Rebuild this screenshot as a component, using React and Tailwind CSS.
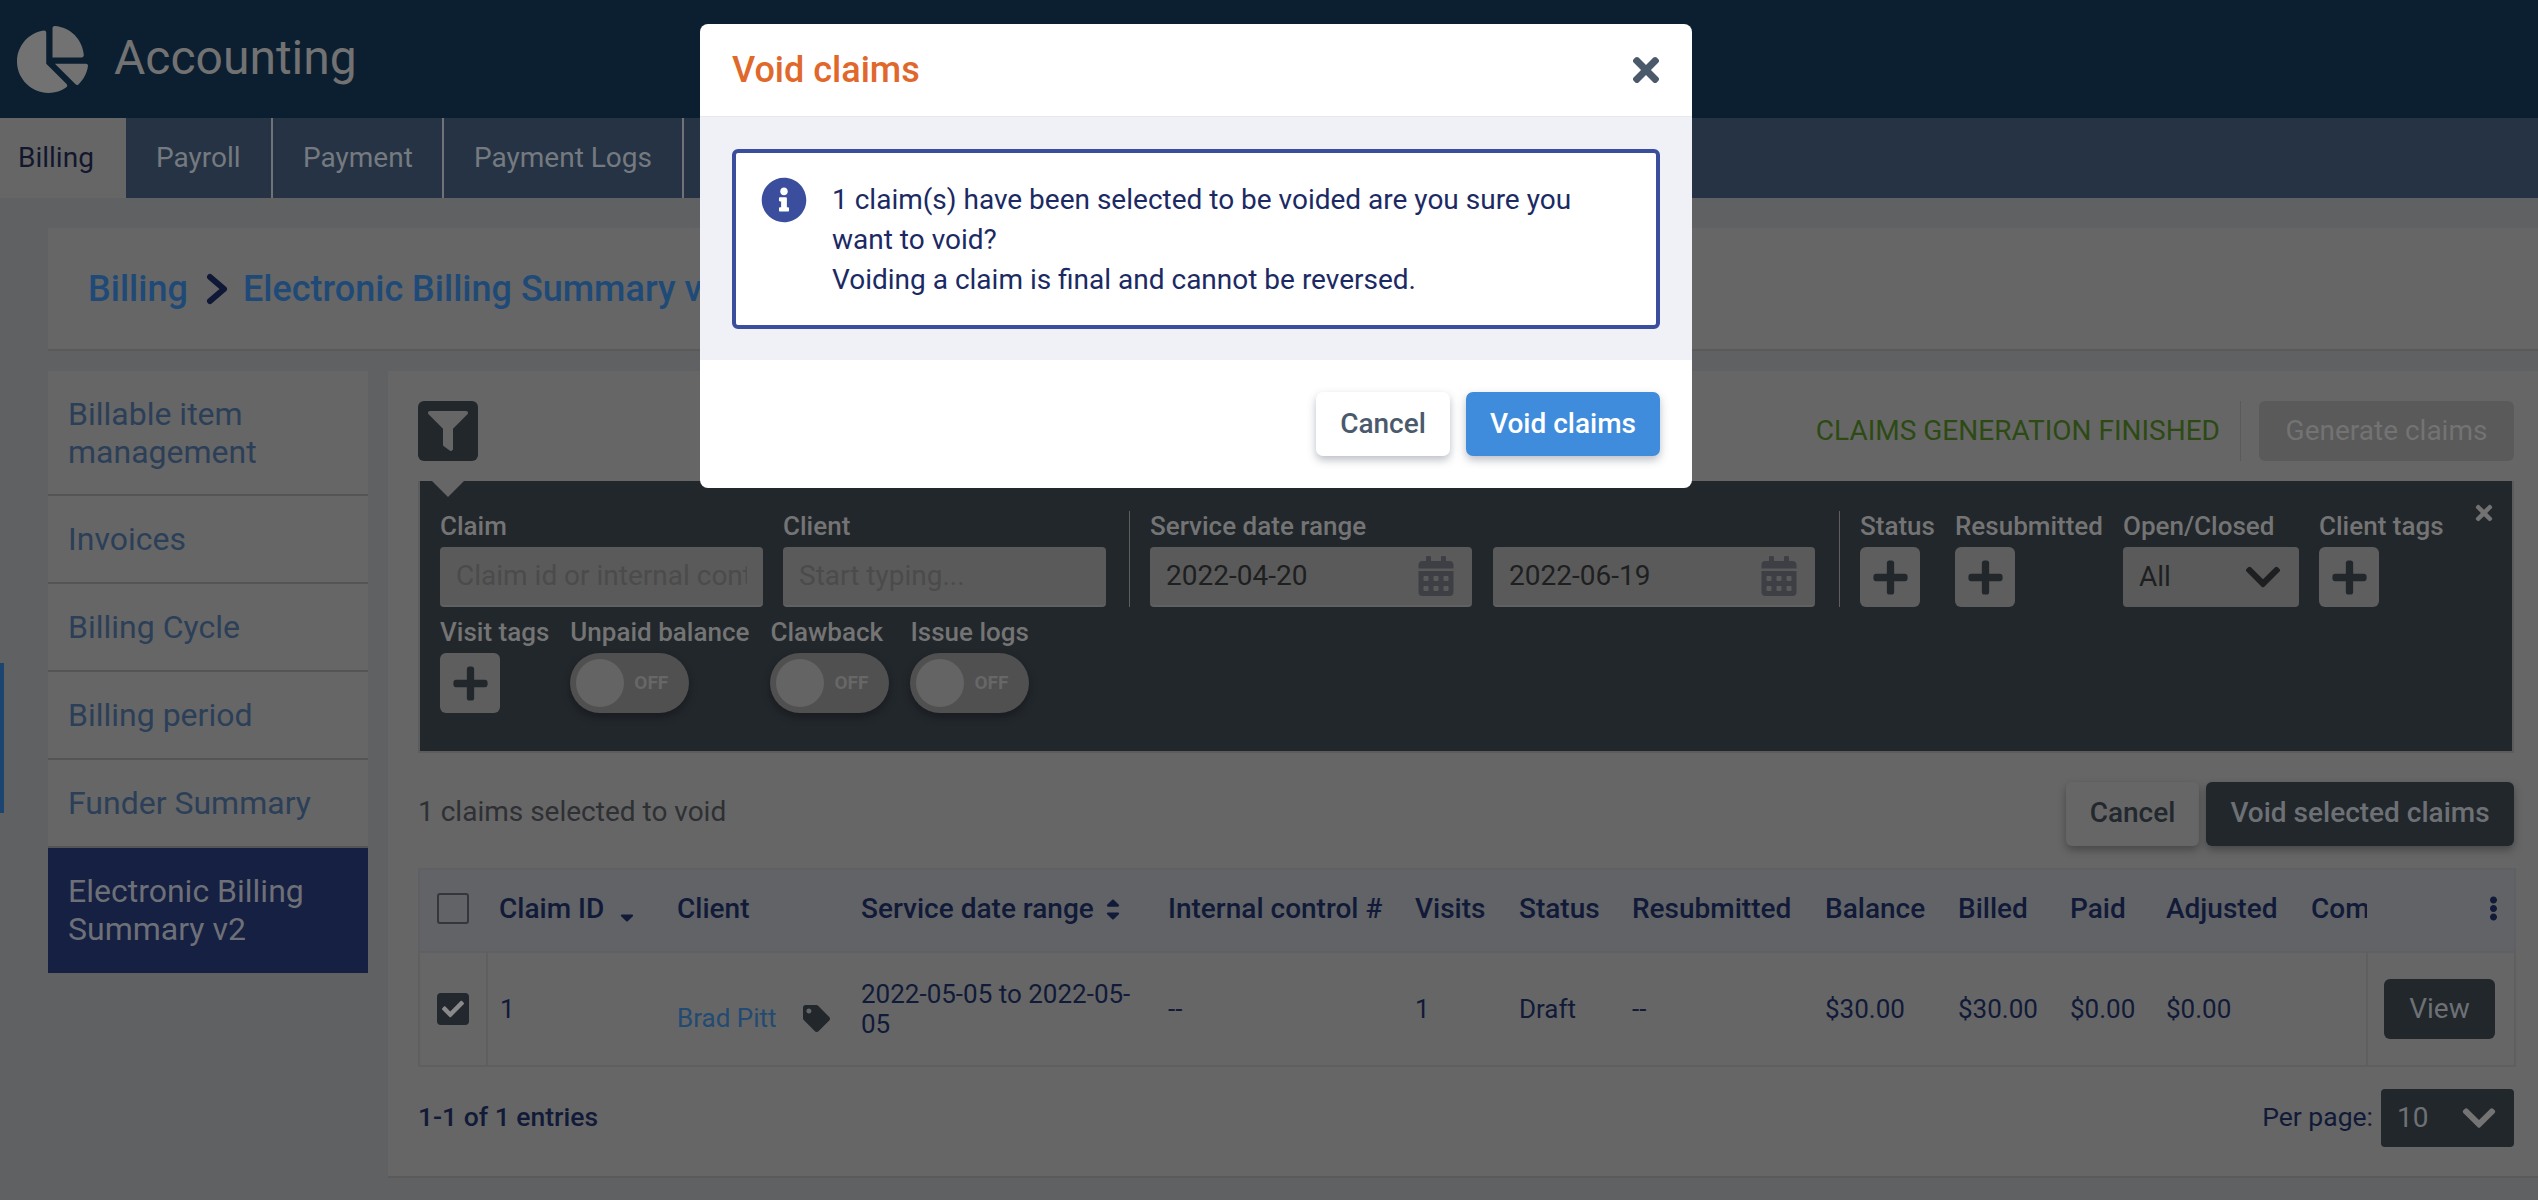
import { FaChartPie, FaFilter, FaCalendarAlt, FaPlus, FaTimes, FaInfoCircle, FaTag, FaChevronDown, FaCheck, FaSortUp, FaSortDown, FaEllipsisV } from "react-icons/fa";

const SIDE_ITEMS = ["Billable item management", "Invoices", "Billing Cycle", "Billing period", "Funder Summary"];

const COLUMNS = [
  { w: 178, label: "Claim ID", sort: "down" },
  { w: 184, label: "Client" },
  { w: 307, label: "Service date range", sort: "both" },
  { w: 247, label: "Internal control #" },
  { w: 104, label: "Visits" },
  { w: 113, label: "Status" },
  { w: 193, label: "Resubmitted" },
  { w: 133, label: "Balance" },
  { w: 112, label: "Billed" },
  { w: 96, label: "Paid" },
  { w: 145, label: "Adjusted" },
  { w: 68, label: "Comments" },
];

function FieldLabel({ children }) {
  return <div className="h-[36px] text-[26px] leading-[30px] font-medium text-[#747474] whitespace-nowrap">{children}</div>;
}

function PlusBox() {
  return (
    <div className="w-[60px] h-[60px] rounded-[6px] bg-[#5e5e5e] flex items-center justify-center text-[#22272c]">
      <FaPlus size={39} />
    </div>
  );
}

function TextField({ placeholder }) {
  return (
    <div className="w-[323px] h-[60px] rounded-[4px] bg-[#5a5a5a] border-b-2 border-[#616161] flex items-center px-[16px] text-[28px] text-[#4b4b4b] overflow-hidden whitespace-nowrap">
      <span className="block w-full overflow-hidden">{placeholder}</span>
    </div>
  );
}

function DateField({ value }) {
  return (
    <div className="w-[322px] h-[60px] rounded-[4px] bg-[#5a5a5a] border-b-2 border-[#616161] flex items-center justify-between pl-[16px] pr-[16px] text-[28px] text-[#1e1f21]">
      {value}
      <FaCalendarAlt size={40} className="text-[#3d3f44]" />
    </div>
  );
}

function OffToggle() {
  return (
    <div className="w-[119px] h-[60px] rounded-full bg-[#505050] shadow-[0_4px_8px_rgba(0,0,0,0.3)] flex items-center pl-[6px]">
      <div className="w-[48px] h-[48px] rounded-full bg-[#646464]" />
      <span className="ml-[10px] text-[19px] font-bold text-[#676767]">OFF</span>
    </div>
  );
}

function SortIcon({ kind }) {
  if (kind === "down") return <FaSortDown size={22} className="ml-[12px] mt-[8px] text-[#111a38]" />;
  return (
    <span className="relative inline-block ml-[12px] w-[14px] h-[24px] text-[#111a38]">
      <FaSortUp size={22} className="absolute -left-[4px] top-[0px]" />
      <FaSortDown size={22} className="absolute -left-[4px] top-[3px]" />
    </span>
  );
}

function ClaimsTable() {
  return (
    <table className="w-[2096px] table-fixed border-collapse text-[26px] text-[#111a38]">
      <colgroup>
        <col className="w-[68px]" />
        {COLUMNS.map((c) => (
          <col key={c.label} style={{ width: c.w }} />
        ))}
        <col className="w-[148px]" />
      </colgroup>
      <thead>
        <tr className="h-[83px] bg-[#616366] border-2 border-[#5e6063]">
          <th className="pl-[17px] pb-[4px] text-left">
            <div className="w-[32px] h-[31px] rounded-[3px] border-2 border-[#33363c]" />
          </th>
          {COLUMNS.map((c) => (
            <th key={c.label} className="pl-[12px] pb-[4px] text-left text-[28px] font-medium overflow-hidden whitespace-nowrap">
              <span className="flex items-center">
                {c.label}
                {c.sort && <SortIcon kind={c.sort} />}
              </span>
            </th>
          ))}
          <th className="pl-[114px] pb-[4px] text-left text-[#111a38]">
            <FaEllipsisV size={25} />
          </th>
        </tr>
      </thead>
      <tbody>
        <tr className="h-[114px] border-2 border-[#5f5f5f]">
          <td className="pl-[17px] border-r-2 border-[#5f5f5f]">
            <div className="w-[32px] h-[32px] rounded-[4px] bg-[#23282e] flex items-center justify-center text-[#8a8a8a]">
              <FaCheck size={22} />
            </div>
          </td>
          <td className="pl-[12px]">1</td>
          <td className="pl-[12px]">
            <div className="flex items-center mt-[18px]">
              <span className="text-[#234a72]">Brad Pitt</span>
              <FaTag size={27} className="ml-[26px] text-[#22272c]" />
            </div>
          </td>
          <td className="pl-[12px] pr-[8px] leading-[30px]">2022-05-05 to 2022-05-05</td>
          <td className="pl-[12px]">--</td>
          <td className="pl-[12px]">1</td>
          <td className="pl-[12px]">Draft</td>
          <td className="pl-[12px]">--</td>
          <td className="pl-[12px]">$30.00</td>
          <td className="pl-[12px]">$30.00</td>
          <td className="pl-[12px]">$0.00</td>
          <td className="pl-[12px]">$0.00</td>
          <td />
          <td className="pl-[16px] border-l-2 border-[#5f5f5f]">
            <div className="w-[111px] h-[60px] rounded-[6px] bg-[#22272c] flex items-center justify-center text-[#6d7176] text-[28px]">View</div>
          </td>
        </tr>
      </tbody>
    </table>
  );
}

function FilterPanel() {
  return (
    <div className="relative h-[272px] bg-[#22272c] border-l-2 border-b-2 border-r-2 border-[#5c5c5c] pl-[20px] pt-[30px]">
      <div className="absolute left-[12px] top-0 border-l-[16px] border-r-[16px] border-t-[16px] border-l-transparent border-r-transparent border-t-[#666666]" />
      <FaTimes size={24} className="absolute right-[16px] top-[20px] text-[#727272]" />
      <div className="flex">
        <div>
          <FieldLabel>Claim</FieldLabel>
          <TextField placeholder="Claim id or internal control #" />
        </div>
        <div className="ml-[20px]">
          <FieldLabel>Client</FieldLabel>
          <TextField placeholder="Start typing..." />
        </div>
        <div className="ml-[23px] mr-[20px] w-[1px] bg-[#5e5e5e]" />
        <div>
          <FieldLabel>Service date range</FieldLabel>
          <div className="flex gap-[21px]">
            <DateField value="2022-04-20" />
            <DateField value="2022-06-19" />
          </div>
        </div>
        <div className="ml-[24px] mr-[20px] w-[1px] bg-[#5e5e5e]" />
        <div className="w-[75px]">
          <FieldLabel>Status</FieldLabel>
          <PlusBox />
        </div>
        <div className="ml-[20px] w-[147px]">
          <FieldLabel>Resubmitted</FieldLabel>
          <PlusBox />
        </div>
        <div className="ml-[21px]">
          <FieldLabel>Open/Closed</FieldLabel>
          <div className="w-[176px] h-[60px] rounded-[4px] bg-[#5a5a5a] flex items-center justify-between pl-[16px] pr-[16px] text-[28px] text-[#1e1f21]">
            All
            <FaChevronDown size={40} />
          </div>
        </div>
        <div className="ml-[20px]">
          <FieldLabel>Client tags</FieldLabel>
          <PlusBox />
        </div>
      </div>
      <div className="flex gap-[21px] mt-[10px]">
        <div>
          <FieldLabel>Visit tags</FieldLabel>
          <PlusBox />
        </div>
        <div>
          <FieldLabel>Unpaid balance</FieldLabel>
          <OffToggle />
        </div>
        <div>
          <FieldLabel>Clawback</FieldLabel>
          <OffToggle />
        </div>
        <div>
          <FieldLabel>Issue logs</FieldLabel>
          <OffToggle />
        </div>
      </div>
    </div>
  );
}

function VoidModal() {
  return (
    <div className="absolute left-[700px] top-[24px] w-[992px] rounded-[8px] bg-white overflow-hidden text-[#1b2a63]">
      <div className="h-[92px] flex items-center justify-between pl-[32px] pr-[27px]">
        <h2 className="text-[36px] font-medium text-[#e0682b]">Void claims</h2>
        <FaTimes size={38} className="text-[#4b5a6b]" />
      </div>
      <div className="h-[244px] bg-[#eff1f6] border-t border-[#e6e8ee] px-[32px] pt-[32px]">
        <div className="h-[180px] rounded-[6px] border-[4px] border-[#3a4e9d] bg-white pl-[25px] pr-[60px] pt-[24px] flex">
          <FaInfoCircle size={46} className="shrink-0 text-[#3a4e9d]" />
          <div className="ml-[25px] mt-[3px] text-[28px] leading-[40px]">
            1 claim(s) have been selected to be voided are you sure you want to void?
            <br />
            Voiding a claim is final and cannot be reversed.
          </div>
        </div>
      </div>
      <div className="h-[128px] flex justify-end gap-[16px] pt-[32px] pr-[32px]">
        <button className="w-[134px] h-[64px] rounded-[7px] bg-white text-[28px] font-medium text-[#4a5a6c] shadow-[0_4px_8px_rgba(60,70,90,0.35)]">Cancel</button>
        <button className="w-[194px] h-[64px] rounded-[7px] bg-[#3f8cdc] text-[28px] font-medium text-white shadow-[0_4px_8px_rgba(60,70,90,0.35)]">Void claims</button>
      </div>
    </div>
  );
}

export default function App() {
  return (
    <div className="relative w-[2538px] h-[1200px] overflow-hidden bg-[#606163] font-[Roboto,sans-serif]">
      {/* top bar */}
      <div className="h-[118px] bg-[#0c1f31] flex items-center pl-[17px] text-[#727272]">
        <FaChartPie size={71} />
        <span className="ml-[26px] mb-[2px] text-[48px] font-normal">Accounting</span>
      </div>

      {/* tabs */}
      <div className="h-[80px] bg-[#263344] flex text-[28px] text-[#757a80]">
        <div className="w-[126px] bg-[#666666] pl-[18px] flex items-center text-[#13172e]">Billing</div>
        <div className="w-[147px] border-r-2 border-[#6f7378] pl-[30px] flex items-center">Payroll</div>
        <div className="w-[171px] border-r-2 border-[#6f7378] pl-[30px] flex items-center">Payment</div>
        <div className="w-[240px] border-r-2 border-[#6f7378] pl-[30px] flex items-center">Payment Logs</div>
      </div>

      {/* breadcrumb */}
      <div className="mt-[30px] ml-[48px] h-[123px] bg-[#666666] border-b-2 border-[#5a5a5a] flex items-center pl-[40px] text-[36px] font-medium text-[#1f4a78]">
        Billing
        <svg width="22" height="32" viewBox="0 0 22 32" fill="none" className="ml-[18px] mr-[15px]">
          <path d="M4 4 L18 16 L4 28" stroke="#101838" strokeWidth="6" strokeLinecap="round" strokeLinejoin="round" />
        </svg>
        Electronic Billing Summary v2
      </div>

      <div className="flex mt-[20px]">
        <div className="w-[4px] h-[150px] shrink-0 mt-[292px] bg-[#1c4470]" />

        {/* side menu */}
        <div className="ml-[44px] w-[320px] shrink-0 h-fit">
          {SIDE_ITEMS.map((item, i) => (
            <div
              key={item}
              className={`${i === 0 ? "h-[125px]" : "h-[88px]"} bg-[#666666] border-b-2 border-[#545454] flex items-center px-[20px] text-[32px] leading-[38px] text-[#2c3f58]`}
            >
              {item}
            </div>
          ))}
          <div className="h-[125px] bg-[#162042] flex items-center px-[20px] pb-[2px] text-[32px] leading-[38px] text-[#6e7078]">Electronic Billing Summary v2</div>
        </div>

        {/* main panel */}
        <div className="ml-[20px] w-[2150px] shrink-0 h-[807px] bg-[#666666] border-b-2 border-[#5a5a5a] pl-[30px] pr-[24px] pt-[30px]">
          <div className="h-[60px] flex items-center justify-between">
            <div className="w-[60px] h-[60px] rounded-[6px] bg-[#22272c] flex items-center justify-center text-[#666666]">
              <FaFilter size={40} />
            </div>
            <div className="flex items-center h-full text-[28px]">
              <span className="text-[#2d4a14]">CLAIMS GENERATION FINISHED</span>
              <div className="ml-[20px] mr-[18px] w-[1px] h-full bg-[#5a5a5a]" />
              <div className="w-[255px] h-full rounded-[6px] bg-[#5a5a5a] flex items-center justify-center text-[#737373]">Generate claims</div>
            </div>
          </div>

          <div className="mt-[20px]">
            <FilterPanel />
          </div>

          <div className="mt-[29px] h-[64px] flex items-center justify-between text-[28px]">
            <span className="-mt-[5px] text-[#2e3034]">1 claims selected to void</span>
            <div className="flex gap-[7px] h-full font-medium">
              <div className="w-[133px] pb-[2px] rounded-[6px] bg-[#666666] shadow-[0_4px_8px_rgba(0,0,0,0.3)] flex items-center justify-center text-[#23282e]">Cancel</div>
              <div className="w-[308px] pb-[2px] rounded-[6px] bg-[#22272c] shadow-[0_4px_8px_rgba(0,0,0,0.3)] flex items-center justify-center text-[#6d7176]">Void selected claims</div>
            </div>
          </div>

          <div className="mt-[22px]">
            <ClaimsTable />
          </div>

          <div className="mt-[22px] h-[58px] flex items-center justify-between text-[26.5px] text-[#111a38]">
            <span className="pb-[2px] font-medium">1-1 of 1 entries</span>
            <div className="flex items-center">
              <span className="pb-[2px]">Per page:</span>
              <div className="ml-[8px] w-[133px] h-[58px] rounded-[4px] bg-[#22272c] flex items-center justify-between pl-[16px] pr-[16px] text-[28px] text-[#6d7176]">
                10
                <FaChevronDown size={38} className="text-[#747474]" />
              </div>
            </div>
          </div>
        </div>
      </div>

      <VoidModal />
    </div>
  );
}
